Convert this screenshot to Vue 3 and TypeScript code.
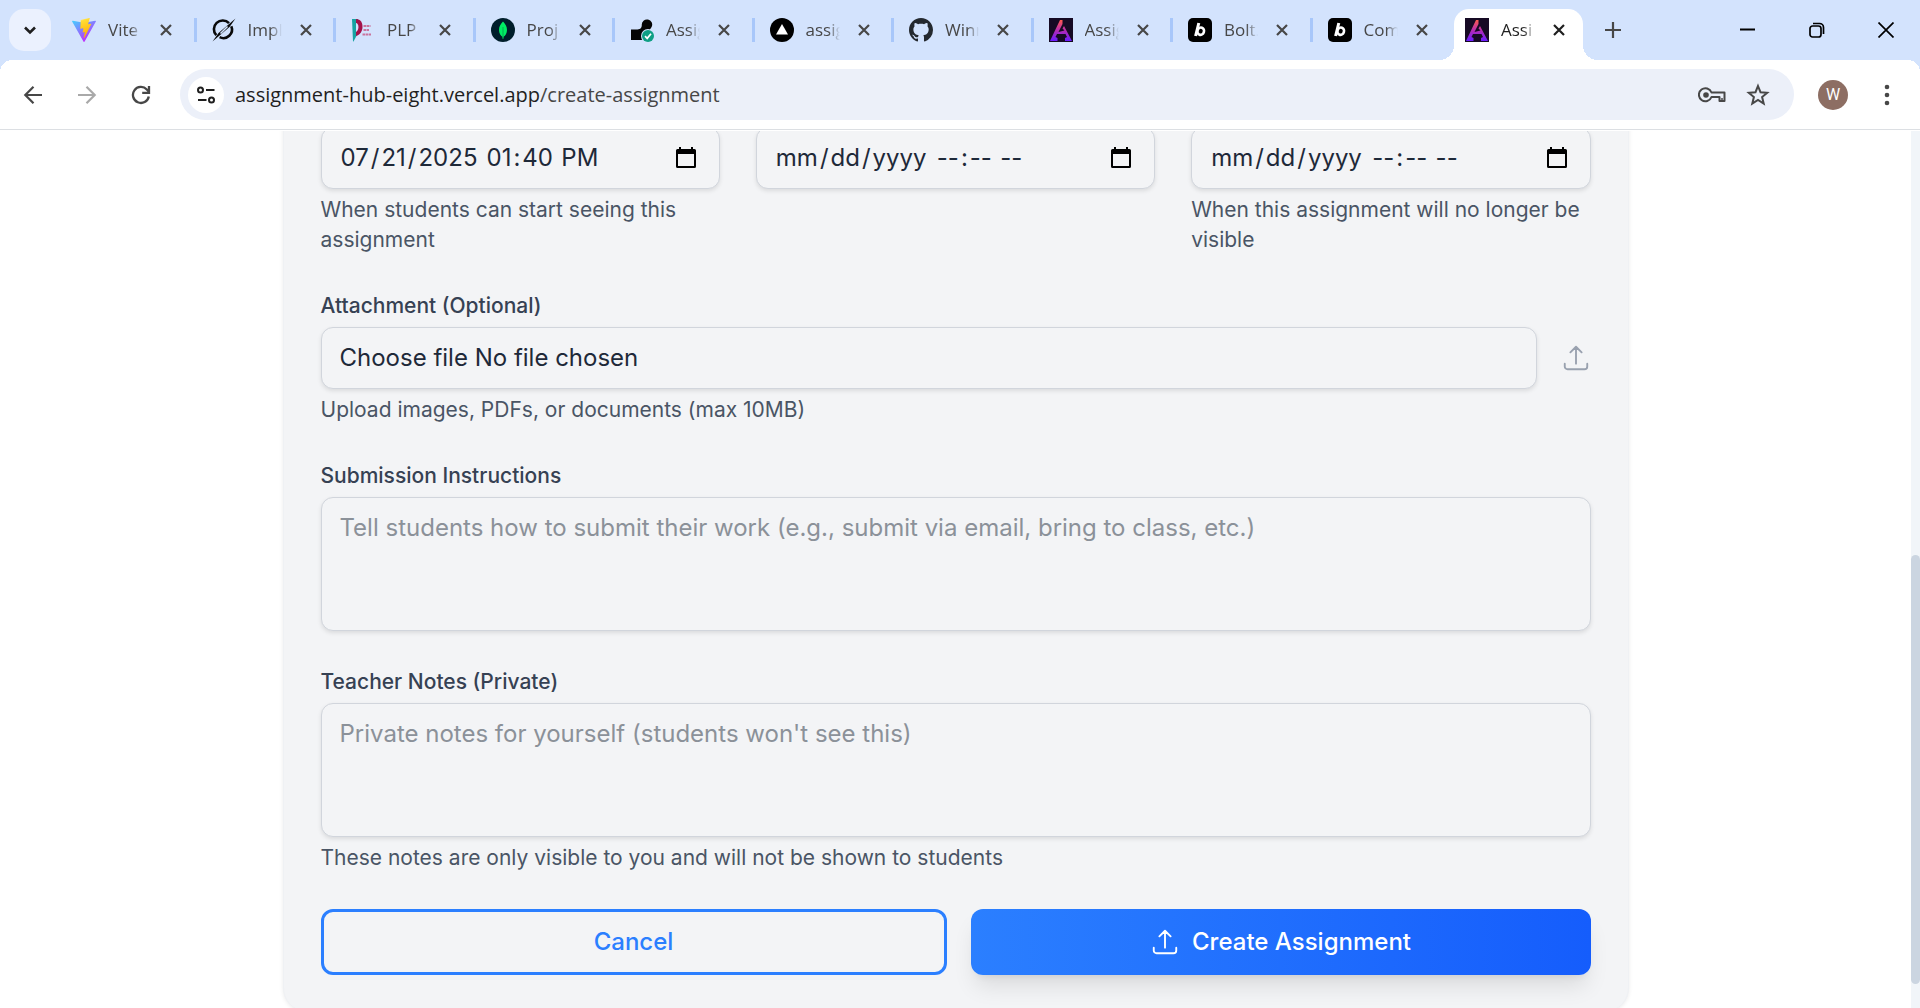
<script setup lang="ts">
import { reactive, ref } from 'vue'

type IconName = 'vite' | 'orbit' | 'plp' | 'leaf' | 'review' | 'vercel' | 'github' | 'hub' | 'bolt'

interface Tab {
  icon: IconName
  title: string
  active?: boolean
}

interface DateField {
  id: string
  name: string
  date: string
  time: string
  hint?: string
}

const tabs: Tab[] = [
  { icon: 'vite', title: 'Vite' },
  { icon: 'orbit', title: 'Impl' },
  { icon: 'plp', title: 'PLP' },
  { icon: 'leaf', title: 'Proj' },
  { icon: 'review', title: 'Assig' },
  { icon: 'vercel', title: 'assig' },
  { icon: 'github', title: 'Winn' },
  { icon: 'hub', title: 'Assig' },
  { icon: 'bolt', title: 'Bolt.' },
  { icon: 'bolt', title: 'Com' },
  { icon: 'hub', title: 'Assi', active: true },
]

const dateFields = reactive<DateField[]>([
  { id: 'from', name: 'Visible from', date: '2025-07-21', time: '13:40', hint: 'When students can start seeing this assignment' },
  { id: 'due', name: 'Due', date: '', time: '' },
  { id: 'until', name: 'Visible until', date: '', time: '', hint: 'When this assignment will no longer be visible' },
])

const instructions = ref('')
const notes = ref('')

function openPicker(id: string) {
  const input = document.getElementById(id) as HTMLInputElement | null
  input?.showPicker()
}
</script>

<template>
  <div class="browser">
    <header class="tab-strip">
      <button class="tab-search" type="button" aria-label="Search tabs">
        <svg width="14" height="14" viewBox="0 0 14 14"><path d="M2 4.5l5 5 5-5" fill="none" stroke="#1f1f1f" stroke-width="2.6" /></svg>
      </button>
      <nav class="tabs" aria-label="Tabs">
        <div v-for="(tab, i) in tabs" :key="i" class="tab" :class="{ active: tab.active }">
          <svg v-if="tab.icon === 'vite'" class="favicon" viewBox="0 0 256 257">
            <defs>
              <linearGradient id="vite-a" x1="0" y1="0" x2=".6" y2=".9"><stop offset="0" stop-color="#41d1ff" /><stop offset="1" stop-color="#bd34fe" /></linearGradient>
              <linearGradient id="vite-b" x1=".4" y1="0" x2=".6" y2="1"><stop offset="0" stop-color="#ffea83" /><stop offset=".1" stop-color="#ffdd35" /><stop offset="1" stop-color="#ffa800" /></linearGradient>
            </defs>
            <path fill="url(#vite-a)" d="M255.153 37.938 134.897 252.976c-2.483 4.44-8.862 4.466-11.382.048L.875 37.958c-2.746-4.814 1.371-10.646 6.827-9.67l120.385 21.517a6.537 6.537 0 0 0 2.322-.004l117.867-21.483c5.438-.991 9.574 4.796 6.877 9.62Z" />
            <path fill="url(#vite-b)" d="M185.432.063 96.44 17.501a3.268 3.268 0 0 0-2.634 3.014l-5.474 92.456a3.268 3.268 0 0 0 3.997 3.378l24.777-5.718c2.318-.535 4.413 1.507 3.936 3.838l-7.361 36.047c-.495 2.426 1.782 4.5 4.151 3.78l15.304-4.649c2.372-.72 4.652 1.36 4.15 3.788l-11.698 56.621c-.732 3.542 3.979 5.473 5.943 2.437l1.313-2.028 72.516-144.72c1.215-2.423-.88-5.186-3.54-4.672l-25.505 4.922c-2.396.462-4.435-1.77-3.759-4.114l16.646-57.705c.677-2.35-1.37-4.583-3.769-4.113Z" />
          </svg>
          <svg v-else-if="tab.icon === 'orbit'" class="favicon" viewBox="0 0 24 24">
            <path d="M4.3 17.2A8.6 8.6 0 0 1 17 5.2M19.3 8.2A8.6 8.6 0 0 1 7.6 19.2" fill="none" stroke="#0a0a0a" stroke-width="2.6" />
            <path d="M.5 23.5L6.5 15 23.5.5l-6 8.500z" fill="#0a0a0a" />
            <path d="M8.500 15.500L15.500 8.500" stroke="#d3e3fd" stroke-width="1.6" />
          </svg>
          <svg v-else-if="tab.icon === 'plp'" class="favicon" viewBox="0 0 24 24">
            <path d="M1 1h6v14L2.500 23.500H2z" fill="#16a3a3" />
            <path d="M5 1c5 0 6.500 4 6.500 8s-2.500 8-6.500 9z" fill="#a3124a" />
            <path d="M5 5c3 0 3.500 7 0 9z" fill="#d3e3fd" />
            <path d="M12.500 8h7M12.500 12h6M11.500 16.500h9" stroke="#c9749d" stroke-width="2.200" stroke-dasharray="2.500 .5" />
          </svg>
          <svg v-else-if="tab.icon === 'leaf'" class="favicon" viewBox="0 0 24 24">
            <circle cx="12" cy="12" r="12" fill="#001e2b" />
            <path d="M12 3.500c2.500 2.500 4 5 4 8.500s-1.700 5.500-3.400 6.700L12.300 21h-.6l-.3-2.300C9.700 17.500 8 15.500 8 12s1.500-6 4-8.500z" fill="#00ed64" />
            <path d="M12 9v11" stroke="#00a04a" stroke-width=".8" />
          </svg>
          <svg v-else-if="tab.icon === 'review'" class="favicon" viewBox="0 0 24 24">
            <path d="M1 11.500h5.500c3 0 5.300-.8 5.300-4.500a5.200 5.200 0 1 1 9.800 2L13 22H1z" fill="#050505" />
            <circle cx="18" cy="18" r="7" fill="#d3e3fd" />
            <circle cx="18" cy="18" r="6" fill="#0e9f84" />
            <path d="M15 18.200l2.200 2.200 3.800-4.600" fill="none" stroke="#fff" stroke-width="1.700" />
          </svg>
          <svg v-else-if="tab.icon === 'vercel'" class="favicon" viewBox="0 0 24 24">
            <circle cx="12" cy="12" r="12" fill="#000" /><path d="M12 6l6 10.500H6z" fill="#fff" />
          </svg>
          <svg v-else-if="tab.icon === 'github'" class="favicon" viewBox="0 0 16 16">
            <path fill="#24292f" d="M8 0C3.580 0 0 3.580 0 8c0 3.540 2.290 6.530 5.470 7.590.4.070.55-.17.55-.38 0-.19-.01-.82-.01-1.490-2.010.37-2.530-.49-2.690-.94-.09-.23-.48-.94-.82-1.130-.28-.15-.68-.52-.01-.53.63-.01 1.080.58 1.230.82.72 1.210 1.870.87 2.330.66.07-.52.28-.87.51-1.070-1.780-.2-3.640-.89-3.640-3.950 0-.87.31-1.590.82-2.150-.08-.2-.36-1.020.08-2.120 0 0 .67-.21 2.200.82.64-.18 1.320-.27 2-.27.68 0 1.360.09 2 .27 1.530-1.040 2.200-.82 2.200-.82.44 1.100.16 1.920.08 2.120.51.56.82 1.270.82 2.150 0 3.070-1.870 3.750-3.650 3.950.29.25.54.73.54 1.480 0 1.070-.01 1.930-.01 2.200 0 .21.15.46.55.38A8.013 8.013 0 0 0 16 8c0-4.420-3.580-8-8-8z" />
          </svg>
          <svg v-else-if="tab.icon === 'hub'" class="favicon" viewBox="0 0 24 24">
            <defs><linearGradient id="hub-a" x1="0" y1="0" x2="0" y2="1"><stop offset="0" stop-color="#ff5a4e" /><stop offset=".5" stop-color="#b32bb4" /><stop offset="1" stop-color="#6a1cff" /></linearGradient></defs>
            <path d="M0 0h24v24H0z" fill="#160a24" />
            <path d="M11 2h2.500v4L9.500 14l6-1.500-2-2L15 8l8 15h-7v-3l2-1-1.500-3H8l-1.500 3 2 1v3H1z" fill="url(#hub-a)" />
          </svg>
          <svg v-else class="favicon" viewBox="0 0 24 24">
            <rect width="24" height="24" rx="5" fill="#000" />
            <path d="M10.800 5L7.600 18" stroke="#fff" stroke-width="3" />
            <ellipse cx="12.700" cy="13.200" rx="3.300" ry="3.700" transform="rotate(20 12.700 13.200)" fill="none" stroke="#fff" stroke-width="2.600" />
          </svg>
          <span class="tab-title">{{ tab.title }}</span>
          <button class="tab-close" type="button" aria-label="Close tab">
            <svg width="12" height="12" viewBox="0 0 12 12"><path d="M1 1l10 10M11 1L1 11" stroke="currentColor" stroke-width="2.200" /></svg>
          </button>
        </div>
      </nav>
      <div class="strip-end">
        <button class="new-tab" type="button" aria-label="New tab">
          <svg width="16" height="16" viewBox="0 0 16 16"><path d="M8 0v16M0 8h16" stroke="#474747" stroke-width="2.200" /></svg>
        </button>
        <div class="window-controls">
          <button type="button" aria-label="Minimize"><svg width="16" height="16" viewBox="0 0 16 16"><path d="M0 7.500h15" stroke="#000" stroke-width="2" /></svg></button>
          <button type="button" aria-label="Restore">
            <svg width="16" height="16" viewBox="0 0 16 16" fill="none" stroke="#000" stroke-width="1.700"><rect x="1" y="4" width="11" height="11" rx="2.500" /><path d="M4 1.500h6.500a4 4 0 0 1 4 4V12" /></svg>
          </button>
          <button type="button" aria-label="Close window"><svg width="16" height="16" viewBox="0 0 16 16"><path d="M.5.5l15 15M15.500.5l-15 15" stroke="#000" stroke-width="1.700" /></svg></button>
        </div>
      </div>
    </header>

    <div class="toolbar">
      <button class="nav-button" type="button" aria-label="Back">
        <svg width="20" height="20" viewBox="0 0 20 20" fill="none" stroke="#474747" stroke-width="2.200"><path d="M19 10H2.500M10.500 1.800L2.300 10l8.200 8.200" /></svg>
      </button>
      <button class="nav-button" type="button" aria-label="Forward" disabled>
        <svg width="20" height="20" viewBox="0 0 20 20" fill="none" stroke="#a9a9a9" stroke-width="2.200"><path d="M1 10h16.500M9.500 1.800l8.200 8.200-8.200 8.200" /></svg>
      </button>
      <button class="nav-button" type="button" aria-label="Reload">
        <svg width="20" height="20" viewBox="0 0 20 20" fill="none" stroke="#474747" stroke-width="2.300"><path d="M17.800 11.500A8 8 0 1 1 15.800 4.500L18 6.800M18 1v6.800h-6.800" /></svg>
      </button>
      <div class="address-bar">
        <button class="site-info" type="button" aria-label="Site information">
          <svg width="20" height="20" viewBox="0 0 20 20" fill="none" stroke="#1f1f1f" stroke-width="2"><circle cx="4.500" cy="5" r="2.500" /><path d="M10 5h8.500M2 15h8.500" /><circle cx="15.500" cy="15" r="2.500" /></svg>
        </button>
        <a class="url" href="#">assignment-hub-eight.vercel.app<span>/create-assignment</span></a>
        <button class="bar-button" type="button" aria-label="Manage passwords">
          <svg width="28" height="18" viewBox="0 0 28 18" fill="none" stroke="#474747" stroke-width="2"><path d="M13.500 6.500h13v8.500h-5v-4h-8a6.500 6.500 0 1 1 0-4.500z" stroke-linejoin="round" /><circle cx="8" cy="9" r="2.800" fill="#474747" stroke="none" /><path d="M24 15v-3" stroke-width="1.500" /></svg>
        </button>
        <button class="bar-button" type="button" aria-label="Bookmark this page">
          <svg width="24" height="24" viewBox="0 0 24 24" fill="none" stroke="#474747" stroke-width="2"><path d="M12 3l2.500 6.200 6.700.5-5.100 4.300 1.600 6.500L12 17l-5.700 3.500L7.900 14 2.800 9.700l6.700-.5z" /></svg>
        </button>
      </div>
      <button class="avatar" type="button" aria-label="Profile">W</button>
      <button class="more" type="button" aria-label="Menu">
        <svg width="6" height="22" viewBox="0 0 6 22" fill="#474747"><circle cx="3" cy="3" r="2.300" /><circle cx="3" cy="11" r="2.300" /><circle cx="3" cy="19" r="2.300" /></svg>
      </button>
    </div>

    <div class="viewport">
      <main class="page">
        <form class="card" @submit.prevent>
          <div class="dates">
            <div v-for="field in dateFields" :key="field.id" class="field">
              <div class="control date-control" :class="{ filled: field.date }" role="group" :aria-label="field.name">
                <input :id="field.id" v-model="field.date" type="date" :aria-label="`${field.name} date`" />
                <input v-model="field.time" type="time" :aria-label="`${field.name} time`" />
                <button class="picker" type="button" aria-label="Open calendar" @click="openPicker(field.id)">
                  <svg width="22" height="22" viewBox="0 0 22 22"><path d="M4 0h2v2h10V0h2v2h1.500A1.500 1.500 0 0 1 21 3.500v16a1.500 1.500 0 0 1-1.500 1.500h-17A1.500 1.500 0 0 1 1 19.500v-16A1.500 1.500 0 0 1 2.500 2H4zM3 7v12h16V7z" fill="#000" fill-rule="evenodd" /></svg>
                </button>
              </div>
              <p v-if="field.hint" class="hint">{{ field.hint }}</p>
            </div>
          </div>

          <div class="field">
            <label class="label" for="attachment">Attachment (Optional)</label>
            <div class="file-row">
              <label class="control file-control">
                <span>Choose file No file chosen</span>
                <input id="attachment" type="file" />
              </label>
              <svg class="upload-icon" viewBox="0 0 24 24"><path d="M3 16.500v2.250A2.250 2.250 0 0 0 5.250 21h13.500A2.250 2.250 0 0 0 21 18.750V16.500m-13.500-9L12 3m0 0 4.500 4.500M12 3v13.500" /></svg>
            </div>
            <p class="hint">Upload images, PDFs, or documents (max 10MB)</p>
          </div>

          <div class="field">
            <label class="label" for="instructions">Submission Instructions</label>
            <textarea id="instructions" v-model="instructions" class="control" rows="3" placeholder="Tell students how to submit their work (e.g., submit via email, bring to class, etc.)"></textarea>
          </div>

          <div class="field">
            <label class="label" for="notes">Teacher Notes (Private)</label>
            <textarea id="notes" v-model="notes" class="control" rows="3" placeholder="Private notes for yourself (students won't see this)"></textarea>
            <p class="hint">These notes are only visible to you and will not be shown to students</p>
          </div>

          <div class="actions">
            <button class="button outline" type="button">Cancel</button>
            <button class="button primary" type="submit">
              <svg class="upload-icon" viewBox="0 0 24 24"><path d="M3 16.500v2.250A2.250 2.250 0 0 0 5.250 21h13.500A2.250 2.250 0 0 0 21 18.750V16.500m-13.500-9L12 3m0 0 4.500 4.500M12 3v13.500" /></svg>
              Create Assignment
            </button>
          </div>
        </form>
      </main>
      <div class="scrollbar"><div class="thumb"></div></div>
    </div>
  </div>
</template>

<style>
body {
  background: #fff;
}
</style>

<style scoped>
* {
  box-sizing: border-box;
}

button {
  display: flex;
  align-items: center;
  justify-content: center;
  padding: 0;
  border: 0;
  background: none;
  font: inherit;
}

.browser {
  display: flex;
  flex-direction: column;
  height: 100vh;
  overflow: hidden;
  background: #fff;
  font-family: Inter, sans-serif;
}

/* Tab strip */
.tab-strip {
  display: flex;
  flex: none;
  height: 60px;
  padding-left: 9px;
  background: #d3e3fd;
  font-family: "Open Sans", sans-serif;
}

.tab-search {
  width: 42px;
  height: 42px;
  margin: 9px 6px 0 0;
  border-radius: 15px;
  background: #ebf1fe;
}

.tabs {
  display: flex;
  flex: 1;
  min-width: 0;
}

.tab {
  display: flex;
  flex: 1;
  align-items: center;
  min-width: 0;
  height: 42px;
  margin-top: 9px;
  padding-left: 15px;
  color: #474747;
}

.tab:not(.active)::after {
  width: 3px;
  height: 24px;
  margin-left: auto;
  background: #a8c7fa;
  content: "";
}

/* The active tab replaces the separator beside it */
.tab:nth-last-child(2)::after {
  visibility: hidden;
}

.tab.active {
  position: relative;
  flex: none;
  width: 129px;
  height: 51px;
  margin-left: 2px;
  padding: 0 12px 9px 11px;
  border-radius: 15px 15px 0 0;
  background: #fff;
  color: #1f1f1f;
}

.tab.active::before,
.tab.active::after {
  position: absolute;
  bottom: 0;
  width: 15px;
  height: 15px;
  content: "";
}

.tab.active::before {
  right: 100%;
  background: radial-gradient(circle at 0 0, transparent 15px, #fff 15px);
}

.tab.active::after {
  left: 100%;
  background: radial-gradient(circle at 100% 0, transparent 15px, #fff 15px);
}

.favicon {
  flex: none;
  width: 24px;
  height: 24px;
  margin-right: 12px;
}

.tab-title {
  flex: none;
  width: 44px;
  font-size: 17px;
  line-height: 26px;
  white-space: nowrap;
  mask-image: linear-gradient(to right, #000 22px, transparent 34px);
}

.tab-close {
  width: 24px;
  height: 24px;
  margin-left: 2px;
  color: inherit;
}

.tab.active .tab-close {
  margin-left: auto;
}

.strip-end {
  display: flex;
  justify-content: space-between;
  width: 337px;
}

.new-tab {
  width: 60px;
  height: 60px;
}

.window-controls {
  display: flex;
}

.window-controls button {
  width: 69px;
  height: 60px;
}

/* Toolbar */
.toolbar {
  display: flex;
  flex: none;
  align-items: center;
  height: 70px;
  padding: 0 18px 0 6px;
  border-bottom: 1px solid #dcdfe3;
  background: radial-gradient(circle at 12px 12px, #fff 12px, #d3e3fd 12px) 0 0 / 12px 12px no-repeat,
    radial-gradient(circle at 0 12px, #fff 12px, #d3e3fd 12px) 100% 0 / 12px 12px no-repeat,
    #fff;
}

.nav-button {
  width: 54px;
  height: 48px;
}

.address-bar {
  display: flex;
  flex: 1;
  align-items: center;
  gap: 4px;
  height: 51px;
  margin-left: 12px;
  padding: 0 15px 0 8px;
  border-radius: 26px;
  background: #ecf0f9;
}

.site-info {
  width: 36px;
  height: 36px;
  border-radius: 50%;
  background: #fff;
}

.url {
  flex: 1;
  margin-left: 7px;
  color: #1f1f1f;
  font-family: "Open Sans", sans-serif;
  font-size: 20px;
  line-height: 28px;
  text-decoration: none;
}

.url span {
  color: #474747;
}

.bar-button {
  width: 42px;
  height: 42px;
}

.avatar {
  width: 30px;
  height: 30px;
  margin: 0 24px;
  border-radius: 50%;
  background: #8d6e63;
  color: #fff;
  font-family: Roboto, sans-serif;
  font-size: 16px;
}

.more {
  width: 30px;
  height: 42px;
}

/* Page */
.viewport {
  display: flex;
  flex: 1;
  min-height: 0;
  margin-top: 1px;
  overflow: hidden;
}

.page {
  flex: 1;
  min-width: 0;
}

.card {
  display: flex;
  flex-direction: column;
  gap: 36px;
  max-width: 1346px;
  margin: -41px auto 0;
  padding: 36px 37px;
  border: 1px solid #eff1f4;
  border-radius: 24px;
  background: #f3f4f6;
  box-shadow: 0 1px 4px rgb(0 0 0 / 8%);
}

.dates {
  display: grid;
  grid-template-columns: repeat(3, 1fr);
  gap: 36px;
}

.field {
  display: flex;
  flex-direction: column;
  gap: 6px;
  min-width: 0;
}

.label,
.hint {
  margin: 0;
  font-size: 21px;
  line-height: 30px;
}

.label {
  color: #364153;
  font-weight: 500;
}

.hint {
  color: #4a5565;
}

.control {
  width: 100%;
  height: 62px;
  margin: 0;
  padding: 12px 18px;
  border: 1px solid #d1d5dc;
  border-radius: 12px;
  background: #f3f4f6;
  box-shadow: 0 2px 4px rgb(0 0 0 / 10%);
  color: #1e2939;
  font-family: Inter, sans-serif;
  font-size: 24px;
  line-height: 36px;
}

.date-control {
  display: flex;
  align-items: center;
  gap: 6px;
}

.date-control input {
  flex: none;
  margin: 0;
  padding: 0;
  border: 0;
  background: none;
  color: inherit;
  font: inherit;
}

.date-control input[type="date"] {
  width: 155px;
}

.date-control.filled input[type="date"] {
  width: 140px;
}

.date-control input::-webkit-calendar-picker-indicator {
  display: none;
}

.date-control input::-webkit-datetime-edit-text {
  padding: 0 1px;
}

.picker {
  width: 30px;
  height: 30px;
  margin-left: auto;
}

textarea.control {
  display: block;
  height: 134px;
  resize: none;
}

textarea.control::placeholder {
  color: #8b9199;
}

.file-row {
  display: flex;
  align-items: center;
  gap: 24px;
}

.file-control {
  position: relative;
  flex: 1;
  min-width: 0;
}

.file-control input {
  position: absolute;
  inset: 0;
  width: 100%;
  opacity: 0;
}

.upload-icon {
  flex: none;
  width: 30px;
  height: 30px;
  fill: none;
  stroke: #99a1af;
  stroke-width: 1.5;
  stroke-linecap: round;
  stroke-linejoin: round;
}

.actions {
  display: flex;
  gap: 24px;
}

.button {
  flex: 1;
  gap: 12px;
  height: 66px;
  padding: 0 36px;
  border-radius: 12px;
  font-size: 24px;
  font-weight: 500;
  line-height: 36px;
}

.outline {
  border: 3px solid #2b7fff;
  color: #2b7fff;
}

.primary {
  background: linear-gradient(to right, #2b7fff, #155dfc);
  box-shadow: 0 15px 22px -4px rgb(0 0 0 / 10%), 0 6px 9px -6px rgb(0 0 0 / 10%);
  color: #fff;
}

.primary .upload-icon {
  stroke: #fff;
}

.scrollbar {
  width: 9px;
  background: #f1f5f9;
}

.thumb {
  position: relative;
  top: 48.4%;
  height: 48.9%;
  border-radius: 5px;
  background: #cbd5e1;
}
</style>
